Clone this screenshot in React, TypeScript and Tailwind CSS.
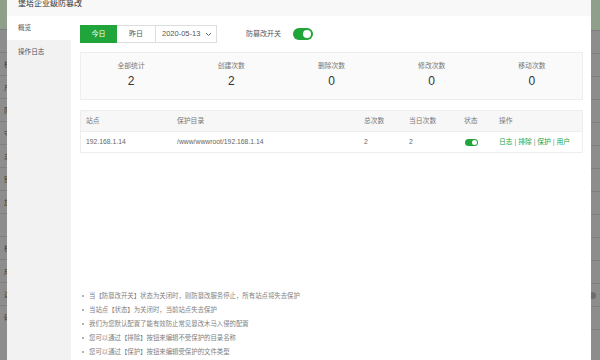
const font = "font-['Liberation_Sans','Noto_Sans_CJK_SC',sans-serif]";

const stats = [
  { label: '全部统计', value: 2 },
  { label: '创建次数', value: 2 },
  { label: '删除次数', value: 0 },
  { label: '修改次数', value: 0 },
  { label: '移动次数', value: 0 },
];

const tips = [
  '当【防篡改开关】状态为关闭时，则防篡改服务停止，所有站点将失去保护',
  '当站点【状态】为关闭时，当前站点失去保护',
  '我们为您默认配置了能有效防止常见篡改木马入侵的配置',
  '您可以通过【排除】按钮来编辑不受保护的目录名称',
  '您可以通过【保护】按钮来编辑受保护的文件类型',
];

const leftFragments = ['', '校', '户', '限', '守', '志', '别', '加', '', '校', '成', '选', '研'];

const Toggle = ({ small }: { small?: boolean }) => (
  <div
    className={
      small
        ? 'w-[13px] h-[7px] rounded-full bg-[#20a53a] flex items-center justify-end pr-[1px]'
        : 'w-[20px] h-[12px] rounded-full bg-[#20a53a] flex items-center justify-end pr-[2px]'
    }
  >
    <div className={small ? 'w-[5px] h-[5px] rounded-full bg-white' : 'w-[8px] h-[8px] rounded-full bg-white'} />
  </div>
);

export default function App() {
  return (
    <div className={`w-[600px] h-[360px] flex overflow-hidden bg-[#8d8d8d] ${font}`}>
      {/* dimmed page behind the dialog */}
      <div className="w-[7px] flex flex-col shrink-0 overflow-hidden">
        <div className="h-[29px] bg-[#8fa08a] shrink-0" />
        {leftFragments.map((t, i) => (
          <div
            key={i}
            className="h-[23px] shrink-0 border-t border-[#7f7f7f] flex items-center justify-end text-[7px] text-[#3a3a3a] leading-none whitespace-nowrap"
          >
            <span className="-mr-[4px]">{t}</span>
          </div>
        ))}
      </div>

      <div className="w-[584px] shrink-0 flex flex-col bg-white">
        <div className="h-[16px] shrink-0 bg-[#f8f8f8] pl-[11px] text-[8px] leading-[7px] text-[#333]">
          堡塔企业级防篡改
        </div>

        <div className="flex flex-1 min-h-0">
          <div className="w-[64px] shrink-0 bg-[#f2f2f2] flex flex-col text-[6.6px] text-[#555]">
            <div className="h-[24px] bg-white pl-[11px] flex items-center">概览</div>
            <div className="h-[24px] pl-[11px] flex items-center">操作日志</div>
          </div>

          <div className="flex-1 flex flex-col pl-[9px] pr-[8px] pt-[9px]">
            <div className="flex items-center h-[18px]">
              <div className="w-[37px] h-[18px] bg-[#20a53a] text-white text-[7px] flex items-center justify-center">
                今日
              </div>
              <div className="w-[38px] h-[18px] border-y border-[#ddd] text-[#555] text-[7px] flex items-center justify-center">
                昨日
              </div>
              <div className="w-[62px] h-[18px] border border-[#ddd] text-[#555] text-[7.5px] flex items-center pl-[6px] gap-[5px]">
                <span>2020-05-13</span>
                <svg width="7" height="5" viewBox="0 0 7 5" fill="none">
                  <path d="M1 1l2.5 2.5L6 1" stroke="#666" strokeWidth="1" />
                </svg>
              </div>
              <span className="ml-[29px] text-[7px] text-[#555]">防篡改开关</span>
              <div className="ml-[12px]">
                <Toggle />
              </div>
            </div>

            <div className="mt-[9px] h-[48px] border border-[#eee] bg-[#fafafa] grid grid-cols-5">
              {stats.map((s) => (
                <div key={s.label} className="flex flex-col items-center pt-[9px]">
                  <span className="text-[6.8px] leading-[8px] text-[#777]">{s.label}</span>
                  <span className="mt-[4px] text-[12px] leading-[14px] text-[#333]">{s.value}</span>
                </div>
              ))}
            </div>

            <div className="mt-[10px] border border-[#eee] text-[6.8px] text-[#666]">
              <div className="h-[20px] bg-[#f7f7f7] grid grid-cols-[91px_187px_45px_55px_35px_1fr] items-center pl-[5px] text-[#777]">
                <span>站点</span>
                <span>保护目录</span>
                <span>总次数</span>
                <span>当日次数</span>
                <span>状态</span>
                <span>操作</span>
              </div>
              <div className="h-[21px] border-t border-[#eee] grid grid-cols-[91px_187px_45px_55px_35px_1fr] items-center pl-[5px]">
                <span>192.168.1.14</span>
                <span>/www/wwwroot/192.168.1.14</span>
                <span>2</span>
                <span>2</span>
                <span className="pl-[1px]">
                  <Toggle small />
                </span>
                <span className="text-[#20a53a] whitespace-nowrap">
                  日志 <span className="text-[#888]">|</span> 排除 <span className="text-[#888]">|</span> 保护{' '}
                  <span className="text-[#888]">|</span> 用户
                </span>
              </div>
            </div>

            <ul className="mt-auto pb-[1px] pl-[2px] flex flex-col text-[6.4px] text-[#808080]">
              {tips.map((t) => (
                <li key={t} className="h-[14px] flex items-center gap-[5px]">
                  <span className="w-[2px] h-[2px] rounded-full bg-[#999] shrink-0" />
                  <span>{t}</span>
                </li>
              ))}
            </ul>
          </div>
        </div>
      </div>

      <div className="flex-1 flex flex-col overflow-hidden">
        <div className="h-[30px] bg-[#8fa08a] shrink-0" />
        {Array.from({ length: 14 }).map((_, i) => (
          <div key={i} className="h-[23px] shrink-0 border-t border-[#7f7f7f] flex items-center">
            {i === 11 && <div className="w-[7px] h-[7px] rounded-full bg-[#6e6e6e] -ml-[2px]" />}
          </div>
        ))}
      </div>
    </div>
  );
}
